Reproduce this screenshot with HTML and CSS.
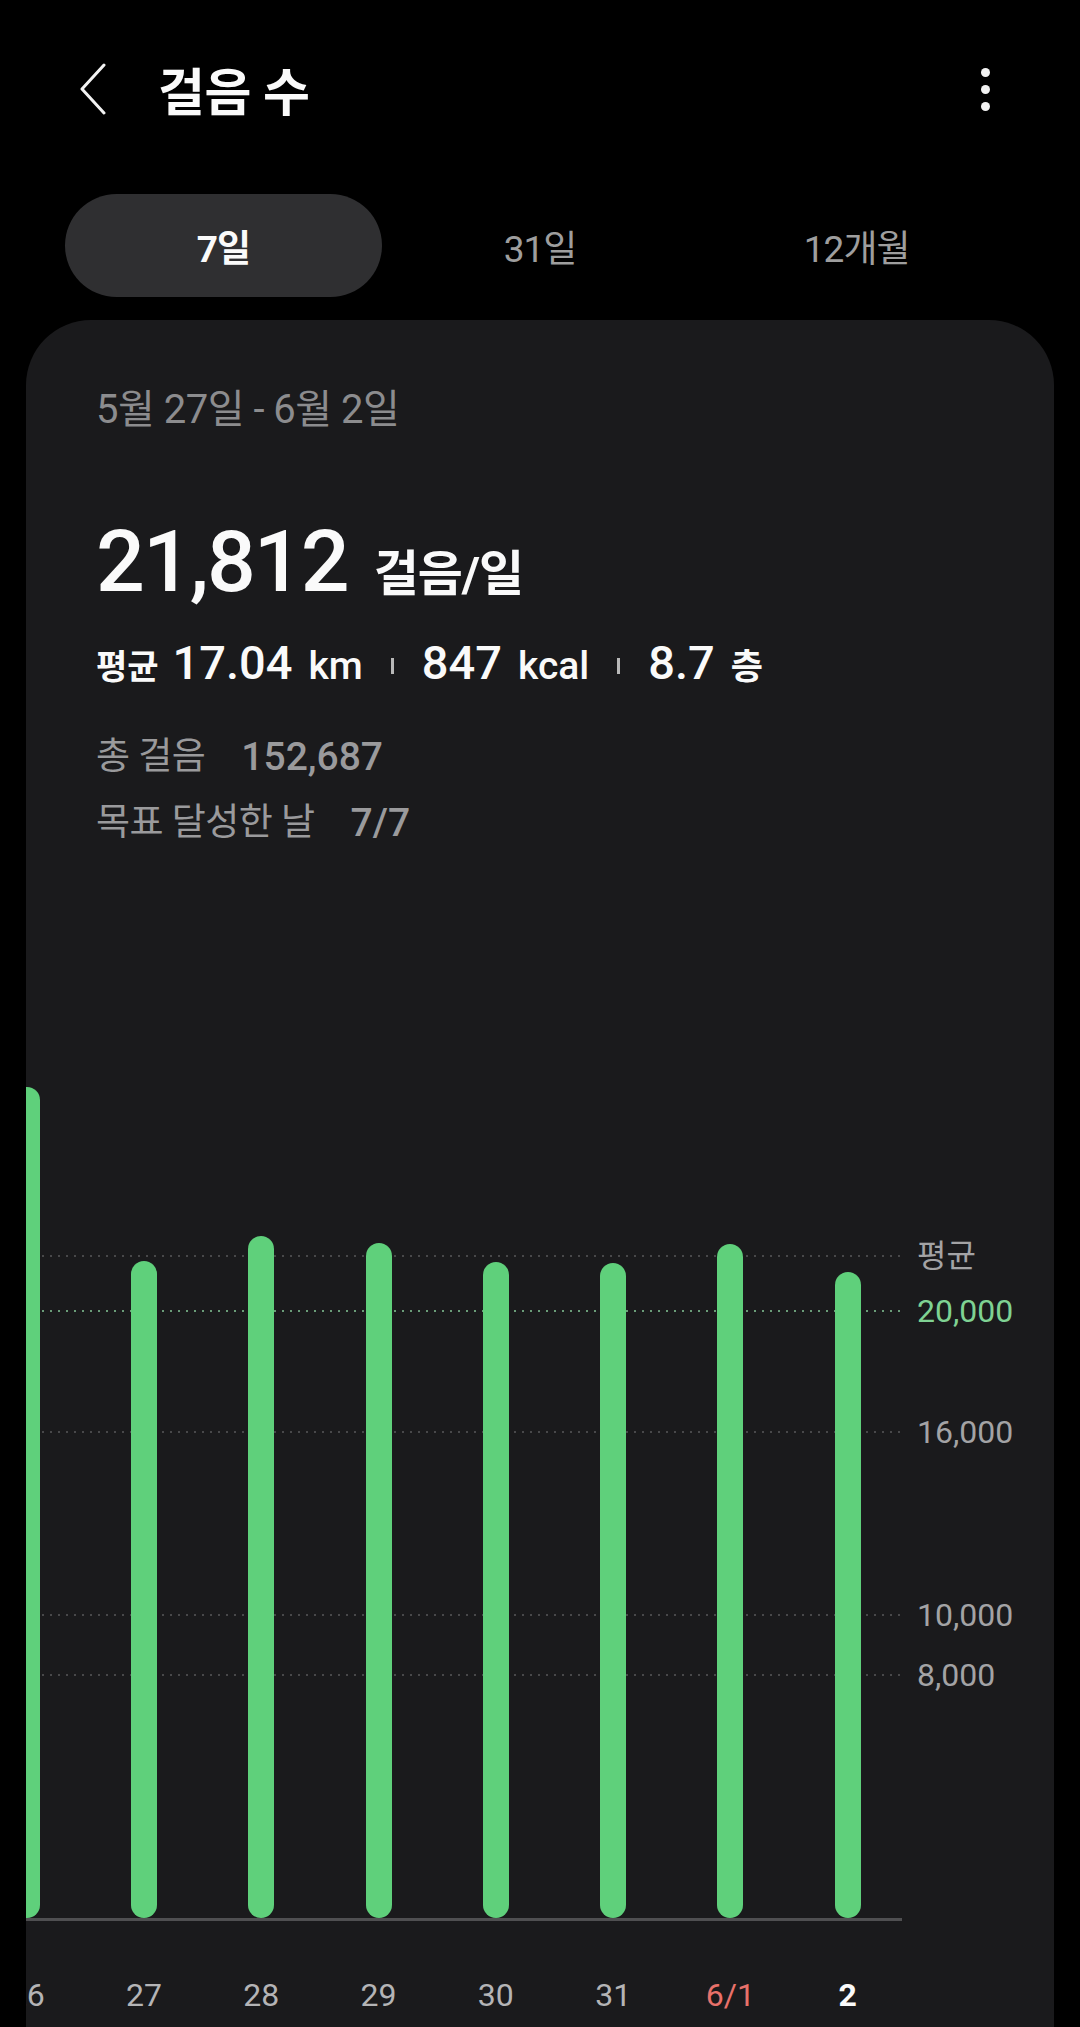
FILE: index.html
```html
<!DOCTYPE html>
<html lang="ko">
<head>
  <meta charset="utf-8">
  <title>걸음 수</title>
  <link rel="stylesheet" href="styles.css">
</head>
<body>

  <header class="topbar">
    <button class="icon-btn back" aria-label="뒤로">
      <svg width="30" height="52" viewBox="0 0 30 52">
        <polyline points="26,2 4,26 26,50" fill="none" stroke="#f2f2f2" stroke-width="3" stroke-linecap="round" stroke-linejoin="round"/>
      </svg>
    </button>
    <h1 class="title">걸음 수</h1>
    <button class="icon-btn more" aria-label="더보기">
      <span></span><span></span><span></span>
    </button>
  </header>

  <nav class="tabs">
    <div class="tab active">7일</div>
    <div class="tab">31일</div>
    <div class="tab">12개월</div>
  </nav>

  <section class="card">
    <div class="summary">
      <div class="range">5월 27일 - 6월 2일</div>

      <div class="headline">
        <span class="big">21,812</span>
        <span class="per">걸음/일</span>
      </div>

      <div class="stats">
        <span class="stat-label">평균</span>
        <span class="num">17.04</span><span class="unit">km</span>
        <i class="sep"></i>
        <span class="num">847</span><span class="unit">kcal</span>
        <i class="sep"></i>
        <span class="num">8.7</span><span class="unit ko">층</span>
      </div>

      <div class="total-row"><span class="total-label">총 걸음</span><span class="total-value">152,687</span></div>
      <div class="total-row"><span class="total-label">목표 달성한 날</span><span class="total-value">7/7</span></div>
    </div>

    <!-- chart: 1,000 steps = 30.35px -->
    <div class="chart">
      <div class="chart-body">
        <div class="plot">
          <div class="grid-line" style="bottom:662px"></div>
          <div class="grid-line goal" style="bottom:607px"></div>
          <div class="grid-line" style="bottom:486px"></div>
          <div class="grid-line" style="bottom:303px"></div>
          <div class="grid-line" style="bottom:243px"></div>

          <div class="bars">
            <div class="col"><div class="bar" style="height:831px"></div></div>
            <div class="col"><div class="bar" style="height:657px"></div></div>
            <div class="col"><div class="bar" style="height:682px"></div></div>
            <div class="col"><div class="bar" style="height:675px"></div></div>
            <div class="col"><div class="bar" style="height:656px"></div></div>
            <div class="col"><div class="bar" style="height:655px"></div></div>
            <div class="col"><div class="bar" style="height:674px"></div></div>
            <div class="col"><div class="bar" style="height:646px"></div></div>
          </div>
        </div>

        <div class="y-axis">
          <span class="y-label" style="bottom:662px">평균</span>
          <span class="y-label goal" style="bottom:607px">20,000</span>
          <span class="y-label" style="bottom:486px">16,000</span>
          <span class="y-label" style="bottom:303px">10,000</span>
          <span class="y-label" style="bottom:243px">8,000</span>
        </div>
      </div>

      <div class="x-axis">
        <span>26</span>
        <span>27</span>
        <span>28</span>
        <span>29</span>
        <span>30</span>
        <span>31</span>
        <span class="holiday">6/1</span>
        <span class="today">2</span>
      </div>
    </div>
  </section>

</body>
</html>
```

FILE: styles.css
```css
* {
  box-sizing: border-box;
}

html {
  background: #000;
}

body {
  margin: 0;
  width: 1080px;
  height: 2027px;
  overflow: hidden;
  background: #000;
  color: #fafafa;
  font-family: Roboto, "Noto Sans CJK KR", sans-serif;
}

/* Top bar */
.topbar {
  display: flex;
  align-items: center;
  height: 178px;
  padding: 0 75px 0 78px;
}

.icon-btn {
  background: none;
  border: none;
  padding: 0;
  cursor: pointer;
}

.back {
  display: flex;
  width: 30px;
  height: 52px;
}

.title {
  flex: 1;
  margin: 0 0 0 50px;
  font-size: 51px;
  font-weight: 700;
  letter-spacing: -0.5px;
  color: #fafafa;
}

.more {
  display: flex;
  flex-direction: column;
  align-items: center;
  gap: 8px;
  width: 40px;
}

.more span {
  width: 9px;
  height: 9px;
  border-radius: 50%;
  background: #f2f2f2;
}

/* Period tabs */
.tabs {
  display: grid;
  grid-template-columns: repeat(3, 1fr);
  height: 103px;
  margin: 16px 65px 0;
}

.tab {
  display: flex;
  align-items: center;
  justify-content: center;
  font-size: 37px;
  color: #9e9e9e;
  letter-spacing: -1px;
}

.tab.active {
  background: #2f2f31;
  border-radius: 52px;
  color: #fafafa;
  font-weight: 700;
}

/* Card */
.card {
  margin: 23px 26px 0;
  height: 1800px;
  background: #1a1a1c;
  border-radius: 65px 65px 0 0;
  overflow: hidden;
}

.summary {
  padding: 64px 70px 0;
}

.range {
  font-size: 40px;
  line-height: 52px;
  color: #8c8c8e;
  letter-spacing: -0.5px;
}

.headline {
  display: flex;
  align-items: baseline;
  gap: 26px;
  margin-top: 76px;
  line-height: 100px;
}

.big {
  font-size: 86px;
  font-weight: 500;
  letter-spacing: -2px;
}

.per {
  font-size: 49px;
  font-weight: 700;
  letter-spacing: -1px;
}

.stats {
  display: flex;
  align-items: baseline;
  margin-top: 8px;
  line-height: 60px;
}

.stat-label {
  font-size: 34px;
  font-weight: 700;
  margin-right: 14px;
}

.num {
  font-size: 47px;
  font-weight: 500;
  margin-right: 16px;
}

.unit {
  font-size: 39px;
  font-weight: 500;
}

.unit.ko {
  font-size: 35px;
  font-weight: 700;
}

.sep {
  align-self: center;
  width: 3px;
  height: 16px;
  margin: 0 28px;
  background: #b8b8b8;
}

.total-row {
  display: flex;
  gap: 36px;
  font-size: 37px;
  line-height: 50px;
  color: #9a9a9c;
}

.stats + .total-row {
  margin-top: 34px;
}

.total-row + .total-row {
  margin-top: 16px;
}

.total-label {
  letter-spacing: -0.5px;
}

.total-value {
  font-size: 39px;
  font-weight: 500;
}

/* Chart */
.chart {
  margin-top: 70px;
}

.chart-body {
  display: flex;
}

.plot {
  position: relative;
  width: 876px;
  height: 1003px;
  border-bottom: 3px solid #4f4f51;
  overflow: hidden;
}

.grid-line {
  position: absolute;
  left: 0;
  right: 0;
  height: 2px;
  margin-bottom: -1px;
  background-image: linear-gradient(to right, #48484a 2px, transparent 2px);
  background-size: 8px 2px;
}

.grid-line.goal {
  background-image: linear-gradient(to right, #6a9c78 2px, transparent 2px);
}

.bars {
  position: relative;
  display: flex;
  align-items: flex-end;
  height: 100%;
  margin-left: -58px;
}

.col {
  display: flex;
  justify-content: center;
  flex: 0 0 117.3px;
}

.bar {
  width: 26px;
  background: #5fd07b;
  border-radius: 13px;
}

.y-axis {
  position: relative;
  flex: 1;
  border-bottom: 3px solid transparent;
}

.y-label {
  position: absolute;
  left: 15px;
  transform: translateY(50%);
  font-size: 32px;
  line-height: 40px;
  color: #a3a3a5;
  white-space: nowrap;
}

.y-label.goal {
  color: #7fd293;
}

.x-axis {
  display: flex;
  margin: 54px 0 0 -58px;
}

.x-axis span {
  flex: 0 0 117.3px;
  text-align: center;
  font-size: 32px;
  line-height: 40px;
  color: #b4b4b6;
}

.x-axis .holiday {
  color: #e8716a;
}

.x-axis .today {
  color: #fafafa;
  font-weight: 700;
}
```
